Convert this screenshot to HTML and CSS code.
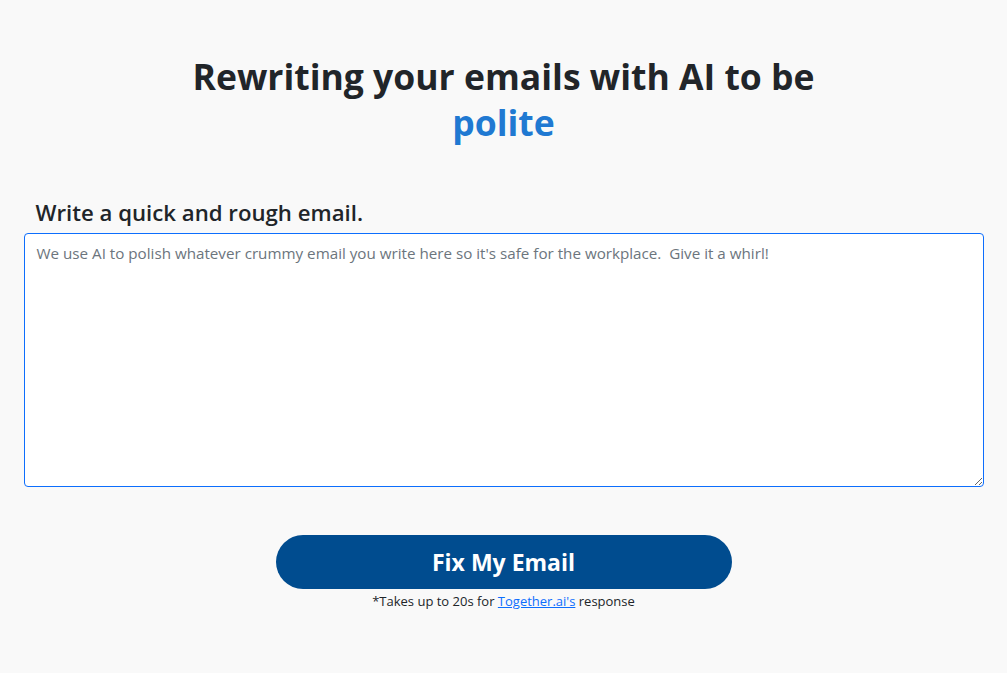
FILE: index.html
```html
<!DOCTYPE html>
<html lang="en">
<head>
<meta charset="utf-8">
<title>Polite Email Rewriter</title>
<link rel="stylesheet" href="styles.css">
</head>
<body>
<main class="page">
  <h1 class="title">Rewriting your emails with AI to be <span class="accent">polite</span></h1>
  <section class="composer">
    <label class="label" for="email">Write a quick and rough email.</label>
    <textarea id="email" class="input" placeholder="We use AI to polish whatever crummy email you write here so it's safe for the workplace.  Give it a whirl!"></textarea>
  </section>
  <div class="actions">
    <button class="fix-btn" type="button">Fix My Email</button>
    <p class="note">*Takes up to 20s for <a href="#" class="note-link">Together.ai's</a> response</p>
  </div>
</main>
</body>
</html>
```
FILE: styles.css
```css
* { box-sizing: border-box; }
html, body {
  margin: 0;
  padding: 0;
  background: #f9f9f9;
  color: #212529;
  font-family: "Open Sans", "Noto Sans", sans-serif;
}
.page {
  width: 960px;
  margin: 0 auto;
  display: flex;
  flex-direction: column;
}
.title {
  margin: 53px 0 0;
  text-align: center;
  font-size: 35.5px;
  line-height: 46px;
  font-weight: 700;
  color: #212529;
}
.accent {
  display: block;
  color: #2079d2;
}
.composer {
  margin-top: 54px;
  display: flex;
  flex-direction: column;
}
.label {
  margin: 0 0 6px 12px;
  font-size: 22.2px;
  line-height: 28px;
  font-weight: 600;
  color: #212529;
}
.input {
  width: 960px;
  height: 254px;
  padding: 8px 12px;
  border: 1px solid #0d6efd;
  border-radius: 4px;
  background: #fff;
  font-family: inherit;
  font-size: 15.2px;
  line-height: 22px;
  color: #212529;
  resize: vertical;
  outline: none;
}
.input::placeholder {
  color: #6c757d;
  opacity: 1;
}
.actions {
  margin-top: 48px;
  display: flex;
  flex-direction: column;
  align-items: center;
}
.fix-btn {
  width: 456px;
  height: 54px;
  border: none;
  border-radius: 27px;
  background: #004c8f;
  color: #fff;
  font-family: inherit;
  font-size: 23px;
  font-weight: 700;
  cursor: pointer;
}
.note {
  margin: 4px 0 0;
  font-size: 13px;
  line-height: 17px;
  color: #212529;
}
.note-link {
  color: #0d6efd;
}
```
